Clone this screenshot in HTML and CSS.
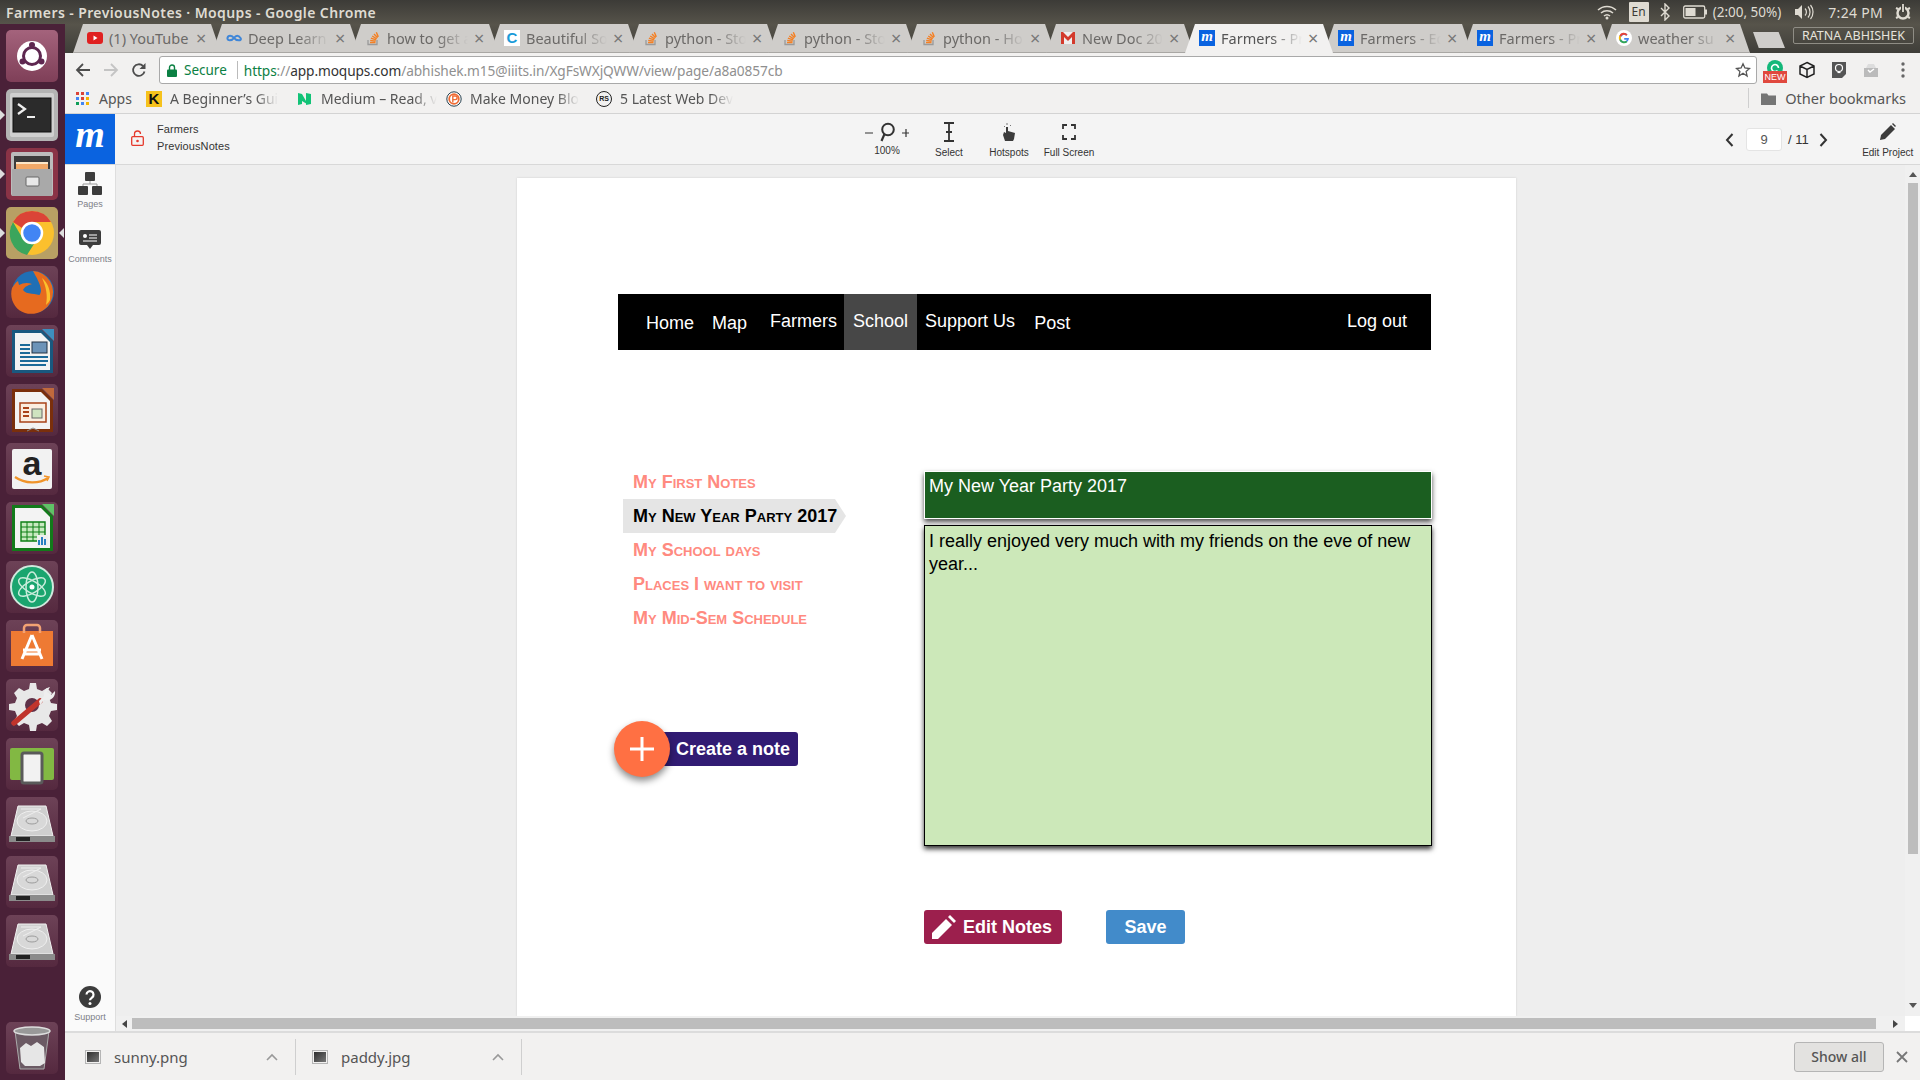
FILE: index.html
```html
<!DOCTYPE html>
<html lang="en">
<head>
    <meta charset="UTF-8">
    <meta name="viewport" content="width=device-width, initial-scale=1.0">
    <title>Farmers - PreviousNotes</title>
    <link rel="stylesheet" href="styles.css">
</head>
<body>
    <svg class="defs" width="0" height="0">
        <defs>
            <linearGradient id="picfill" x1="0" y1="0" x2="1" y2="1"><stop offset="0" stop-color="#2e2e2e"/><stop offset="1" stop-color="#777"/></linearGradient>
        </defs>
        <symbol id="so" viewBox="0 0 16 16">
            <path d="M3 10v4.500h9V10" fill="none" stroke="#9a9a9a" stroke-width="1.300"/>
            <path d="M5 12.500h5.500M5.200 10.400l5.400 .7M5.900 8.200l5.100 1.700M7.200 6l4.500 2.800M9 4l3.600 3.700M11.300 2.300l2 4.600" fill="none" stroke="#f48024" stroke-width="1.400"/>
        </symbol>
        <symbol id="hdd" viewBox="0 0 52 52">
            <path d="M12 9h28l7 30H5z" fill="#cfcfcf" stroke="#f2f2f2"/>
            <ellipse cx="26" cy="24" rx="15" ry="10" fill="#d8d8d8" stroke="#efefef"/>
            <ellipse cx="26" cy="24" rx="6" ry="3" fill="none" stroke="#9c9c9c"/>
            <path d="M15 12l20 0-18 9" fill="none" stroke="#eee"/>
            <path d="M3 39h46v6H3z" fill="#8b8b8b"/>
            <path d="M10 40h14v4H10z" fill="#222"/>
        </symbol>
        <symbol id="pic" viewBox="0 0 16 16">
            <rect x=".5" y="1.500" width="15" height="13" fill="#f2f1f0" stroke="#b5b5b5"/>
            <rect x="2" y="3" width="12" height="10" fill="url(#picfill)"/>
        </symbol>
    </svg>

    <div class="topbar">
        <span class="window-title">Farmers - PreviousNotes · Moqups - Google Chrome</span>
        <div class="indicators">
            <svg class="ind-wifi" width="20" height="16" viewBox="0 0 20 16"><path d="M1 6a13 13 0 0 1 18 0M4 9a9 9 0 0 1 12 0M7 12a4.500 4.500 0 0 1 6 0" fill="none" stroke="#dfdbd2" stroke-width="1.500"/><circle cx="10" cy="14" r="1.500" fill="#dfdbd2"/></svg>
            <span class="ind-lang">En</span>
            <svg class="ind-bt" width="10" height="18" viewBox="0 0 10 18"><path d="M1 5l8 8-4 4V1l4 4-8 8" fill="none" stroke="#dfdbd2" stroke-width="1.400"/></svg>
            <svg class="ind-batt" width="24" height="14" viewBox="0 0 24 14"><rect x=".7" y="1" width="21" height="12" rx="1.500" fill="none" stroke="#dfdbd2" stroke-width="1.300"/><rect x="2.500" y="3" width="10" height="8" fill="#dfdbd2"/><rect x="22" y="4.500" width="2" height="5" fill="#dfdbd2"/></svg>
            <span class="ind-text ind-pct">(2:00, 50%)</span>
            <svg class="ind-vol" width="20" height="16" viewBox="0 0 20 16"><path d="M1 5h3l4-4v14l-4-4H1z" fill="#dfdbd2"/><path d="M11 4.500a5 5 0 0 1 0 7M14 2.500a8.500 8.500 0 0 1 0 11M16.500 1a11 11 0 0 1 0 14" fill="none" stroke="#dfdbd2" stroke-width="1.200"/></svg>
            <span class="ind-text ind-clock">7:24 PM</span>
            <svg class="ind-power" width="18" height="18" viewBox="0 0 18 18"><circle cx="9" cy="10" r="5.500" fill="none" stroke="#dfdbd2" stroke-width="2.500"/><path d="M9 1v8" stroke="#3f3e39" stroke-width="4"/><path d="M9 1v8" stroke="#dfdbd2" stroke-width="1.800"/><path d="M2 5l2 1M16 5l-2 1M2 15l2-1M16 15l-2-1" stroke="#dfdbd2" stroke-width="2"/></svg>
        </div>
    </div>

    <div class="desktop">
        <div class="launcher">
            <div class="tile tile-ubuntu"><svg width="52" height="52" viewBox="0 0 52 52"><circle cx="26" cy="26" r="15" fill="#fff"/><circle cx="26" cy="26" r="8.500" fill="none" stroke="#5e2750" stroke-width="3"/><circle cx="26" cy="15" r="3" fill="#5e2750"/><circle cx="16.500" cy="31.500" r="3" fill="#5e2750"/><circle cx="35.500" cy="31.500" r="3" fill="#5e2750"/></svg></div>
            <div class="tile tile-term marked"><svg width="52" height="52" viewBox="0 0 52 52"><rect x="4" y="4" width="44" height="44" rx="2" fill="#d0d0d0"/><rect x="7" y="9" width="38" height="34" fill="#2b2b2b" stroke="#111"/><path d="M12 15l7 5-7 5" fill="none" stroke="#eee" stroke-width="2.200"/><path d="M21 28h8" stroke="#eee" stroke-width="2"/></svg></div>
            <div class="tile tile-files marked"><svg width="52" height="52" viewBox="0 0 52 52"><rect x="5" y="4" width="42" height="44" rx="2" fill="#bcbcbc"/><rect x="8" y="8" width="36" height="14" fill="#3b3b3b"/><path d="M10 15h32v7H10z" fill="#f0a868"/><path d="M10 15h32" stroke="#fbe6c8" stroke-width="2"/><rect x="6" y="21" width="40" height="27" fill="#a9a9a9"/><rect x="20" y="29" width="13" height="9" rx="1" fill="#e8e8e8" stroke="#666"/></svg></div>
            <div class="tile tile-chrome marked both"><svg width="52" height="52" viewBox="0 0 52 52"><circle cx="26" cy="26" r="22" fill="#fbc02d"/><path d="M26 4a22 22 0 0 1 19 11H26a11 11 0 0 0-10 6L7 15A22 22 0 0 1 26 4z" fill="#db4437"/><path d="M7 15l10 17a11 11 0 0 0 11 5l-7 11A22 22 0 0 1 7 15z" fill="#3ba55c"/><circle cx="26" cy="26" r="10" fill="#4285f4" stroke="#fff" stroke-width="2.500"/></svg></div>
            <div class="tile"><svg width="52" height="52" viewBox="0 0 52 52"><circle cx="27" cy="26" r="21" fill="#1f6fb5"/><path d="M27 5a21 21 0 0 1 18 30c-4 10-16 15-26 12C9 44 3 33 6 22c2-3 3-5 6-7l1 4c4-2 8-3 13-1-3 1-7 2-9 6 3 5 14 3 18 6-3 8-13 8-18 5 9 1 17-3 18-10 0-7-5-14-8-20z" fill="#e66a1f"/><path d="M36 12c6 5 9 13 8 22-1 2-3 4-4 5 2-10 0-18-4-27z" fill="#fbc02d"/></svg></div>
            <div class="tile"><svg width="52" height="52" viewBox="0 0 52 52"><path d="M6 5h30l11 11v32H6z" fill="#19587f"/><path d="M9 8h26l9 9v28H9z" fill="#f3f3f3"/><path d="M36 4l12 0v12z" fill="#3d8fbf"/><path d="M14 20h10M14 24h10M14 28h10M14 32h28M14 36h28M14 40h26" stroke="#1b6a99" stroke-width="1.800"/><rect x="26" y="17" width="15" height="11" fill="#6c93b8" stroke="#234"/></svg></div>
            <div class="tile"><svg width="52" height="52" viewBox="0 0 52 52"><path d="M6 5h30l11 11v32H6z" fill="#7a2f0c"/><path d="M9 8h26l9 9v28H9z" fill="#f3f3f3"/><path d="M36 4l12 0v12z" fill="#c0693c"/><rect x="14" y="19" width="26" height="19" fill="#fbeee0" stroke="#a9431a" stroke-width="1.500"/><path d="M17 24h6M17 28h6M17 32h6" stroke="#a9431a" stroke-width="2"/><rect x="26" y="25" width="10" height="9" fill="#cfe3c0" stroke="#666"/><path d="M27 44l-6 3M27 44l6 3" stroke="#888"/></svg></div>
            <div class="tile"><svg width="52" height="52" viewBox="0 0 52 52"><rect x="6" y="6" width="40" height="40" rx="2" fill="#f2f2f2"/><text class="amz" x="26" y="32" text-anchor="middle">a</text><path d="M9 34c10 7 24 7 33 1" fill="none" stroke="#f0942a" stroke-width="2.200"/><path d="M38 33l5 1-2 4" fill="none" stroke="#f0942a" stroke-width="1.500"/></svg></div>
            <div class="tile"><svg width="52" height="52" viewBox="0 0 52 52"><path d="M6 3h30l11 11v35H6z" fill="#127a1a"/><path d="M9 6h26l9 9v31H9z" fill="#f3f3f3"/><path d="M36 2l12 0v12z" fill="#5fc266"/><path d="M15 20h24v19H15z" fill="#c8eac0" stroke="#0d7f15" stroke-width="1.400"/><path d="M15 25h24M15 30h24M15 35h24M21 20v19M27 20v19M33 20v19" stroke="#0d7f15"/><rect x="31" y="33" width="11" height="11" fill="#eee"/><path d="M33 43v-5M36 43v-8M39 43v-6" stroke="#2a7fc1" stroke-width="2"/></svg></div>
            <div class="tile"><svg width="52" height="52" viewBox="0 0 52 52"><circle cx="26" cy="26" r="21" fill="#1aa56f" stroke="#cfe9dd" stroke-width="2"/><g fill="none" stroke="#c9ecdb" stroke-width="1.500"><ellipse cx="26" cy="26" rx="6" ry="15" transform="rotate(60 26 26)"/><ellipse cx="26" cy="26" rx="6" ry="15" transform="rotate(-60 26 26)"/><ellipse cx="26" cy="26" rx="6" ry="15"/></g><circle cx="26" cy="26" r="2.500" fill="#fff"/></svg></div>
            <div class="tile"><svg width="52" height="52" viewBox="0 0 52 52"><path d="M5 11h42v35H5z" fill="#ee7a33"/><path d="M18 13V8a3 3 0 0 1 3-3h10a3 3 0 0 1 3 3v5" fill="none" stroke="#f3a273" stroke-width="2.500"/><path d="M26 15L16 39M26 15l10 24M17 30h18M17 34h18" stroke="#fff" stroke-width="3" fill="none"/></svg></div>
            <div class="tile"><svg width="52" height="52" viewBox="0 0 52 52"><path d="M24 4h6l1 6 5 2 5-3 5 5-3 5 2 5 6 1v6l-6 1-2 5 3 5-5 5-5-3-5 2-1 6h-6l-1-6-5-2-5 3-5-5 3-5-2-5-6-1v-6l6-1 2-5-3-5 5-5 5 3 5-2z" fill="#e8e8e8"/><circle cx="26" cy="26" r="7" fill="#5e3148"/><path d="M8 44l26-22" stroke="#c0342c" stroke-width="5.500" stroke-linecap="round"/><path d="M33 22l5-5c-1-4 1-8 6-9l-3 5 4 3 4-4c1 6-5 11-11 9l-4 5z" fill="#eee"/></svg></div>
            <div class="tile"><svg width="52" height="52" viewBox="0 0 52 52"><rect x="4" y="10" width="44" height="32" rx="2" fill="#82b843"/><rect x="16" y="15" width="20" height="30" rx="2" fill="#f2f2f2" stroke="#5a5a5a" stroke-width="3"/></svg></div>
            <div class="tile"><svg width="52" height="52"><use href="#hdd"/></svg></div>
            <div class="tile"><svg width="52" height="52"><use href="#hdd"/></svg></div>
            <div class="tile"><svg width="52" height="52"><use href="#hdd"/></svg></div>
            <div class="tile trash"><svg width="52" height="52" viewBox="0 0 52 52"><path d="M9 9l5 38h24l5-38z" fill="#6b5a64" stroke="#aaa"/><ellipse cx="26" cy="9" rx="18" ry="4" fill="#999" stroke="#ddd" stroke-width="1.500"/><path d="M14 26l6-5 5 3 6-4 7 5 1 16-5 3H19l-4-4z" fill="#e6e6e6"/></svg></div>
        </div>

        <div class="browser">
            <div class="tabstrip">
                <div class="tab"><svg class="fav" width="16" height="16" viewBox="0 0 16 16"><rect y="2" width="16" height="12" rx="3" fill="#e02020"/><path d="M6.500 5.500l4 2.500-4 2.500z" fill="#fff"/></svg><span class="tab-title whole">(1) YouTube</span><span class="tab-x">×</span></div>
                <div class="tab"><svg class="fav" width="16" height="16" viewBox="0 0 16 16"><path d="M8 8c-2-3-6-3-6.500 0S6 11 8 8s4.500-3 6.500 0-4.500 3-6.500 0z" fill="none" stroke="#3f86d8" stroke-width="2"/></svg><span class="tab-title">Deep Learn</span><span class="tab-x">×</span></div>
                <div class="tab"><svg class="fav" width="16" height="16"><use href="#so"/></svg><span class="tab-title">how to get a</span><span class="tab-x">×</span></div>
                <div class="tab"><span class="fav fav-c">C</span><span class="tab-title">Beautiful So</span><span class="tab-x">×</span></div>
                <div class="tab"><svg class="fav" width="16" height="16"><use href="#so"/></svg><span class="tab-title">python - Sto</span><span class="tab-x">×</span></div>
                <div class="tab"><svg class="fav" width="16" height="16"><use href="#so"/></svg><span class="tab-title">python - Sto</span><span class="tab-x">×</span></div>
                <div class="tab"><svg class="fav" width="16" height="16"><use href="#so"/></svg><span class="tab-title">python - Ho</span><span class="tab-x">×</span></div>
                <div class="tab"><svg class="fav" width="16" height="16" viewBox="0 0 16 16"><path d="M1 2h14v12H1z" fill="#eee"/><path d="M1 14V2h2l5 5 5-5h2v12h-3V7L8 11 4 7v7z" fill="#d33a2c"/></svg><span class="tab-title">New Doc 20</span><span class="tab-x">×</span></div>
                <div class="tab active"><span class="fav fav-m">m</span><span class="tab-title">Farmers - Pr</span><span class="tab-x">×</span></div>
                <div class="tab"><span class="fav fav-m">m</span><span class="tab-title">Farmers - Ed</span><span class="tab-x">×</span></div>
                <div class="tab"><span class="fav fav-m">m</span><span class="tab-title">Farmers - Pr</span><span class="tab-x">×</span></div>
                <div class="tab"><svg class="fav" width="16" height="16" viewBox="0 0 16 16"><circle cx="8" cy="8" r="8" fill="#fff"/><path d="M13 8H8.200v1.800h2.800A3.200 3.200 0 1 1 10.200 5.700l1.300-1.300A5 5 0 1 0 13 8z" fill="#4285f4"/><path d="M3.400 5.500A5 5 0 0 1 11.500 4.400l-1.300 1.300A3.200 3.200 0 0 0 5 6.800z" fill="#ea4335"/><path d="M3.400 5.500L5 6.800a3.200 3.200 0 0 0 0 2.400l-1.500 1.200a5 5 0 0 1-.1-4.900z" fill="#fbbc05"/><path d="M3.500 10.400L5 9.200a3.200 3.200 0 0 0 5 1.500l1.500 1.200a5 5 0 0 1-8-1.500z" fill="#34a853"/></svg><span class="tab-title">weather su</span><span class="tab-x">×</span></div>
                <div class="newtab"></div>
                <span class="profile">RATNA ABHISHEK</span>
            </div>

            <div class="toolbar">
                <svg class="nav-ic ic-back" width="16" height="16" viewBox="0 0 16 16"><path d="M15 8H2M8 2L2 8l6 6" fill="none" stroke="#4d4d4d" stroke-width="1.800"/></svg>
                <svg class="nav-ic ic-fwd" width="16" height="16" viewBox="0 0 16 16"><path d="M1 8h13M8 2l6 6-6 6" fill="none" stroke="#c4c4c4" stroke-width="1.800"/></svg>
                <svg class="nav-ic ic-reload" width="16" height="16" viewBox="0 0 16 16"><path d="M13.500 9.500A5.800 5.800 0 1 1 12 4" fill="none" stroke="#4d4d4d" stroke-width="1.800"/><path d="M14.500 1v6h-6z" fill="#4d4d4d"/></svg>
                <div class="omnibox">
                    <svg class="lock" width="10" height="13" viewBox="0 0 10 13"><path d="M2.500 6V3.500a2.500 2.500 0 0 1 5 0V6" fill="none" stroke="#0b8043" stroke-width="1.400"/><rect y="5.500" width="10" height="7.500" rx="1" fill="#0b8043"/></svg>
                    <span class="secure">Secure</span>
                    <span class="omni-sep"></span>
                    <span class="url"><span class="scheme">https</span>://<span class="host">app.moqups.com</span>/abhishek.m15@iiits.in/XgFsWXjQWW/view/page/a8a0857cb</span>
                    <svg class="star" width="16" height="16" viewBox="0 0 16 16"><path d="M8 1.800l1.900 4.200 4.600.5-3.400 3.100 1 4.500L8 11.300l-4.100 2.800 1-4.500L1.500 6.500 6.100 6z" fill="none" stroke="#555" stroke-width="1.300"/></svg>
                </div>
                <div class="exts">
                    <div class="ext-gram"><svg width="18" height="16" viewBox="0 0 18 16"><circle cx="9" cy="9" r="8" fill="#14b87a"/><path d="M12.500 9a3.500 3.500 0 1 0-1 2.500" fill="none" stroke="#fff" stroke-width="1.600"/></svg><span class="new-badge">NEW</span></div>
                    <svg class="ext-cube" width="18" height="18" viewBox="0 0 18 18"><path d="M9 1.500l7 3.500v8l-7 3.500L2 13V5zM2 5l7 3.500L16 5M9 8.500v8" fill="none" stroke="#222" stroke-width="1.500"/></svg>
                    <svg class="ext-bulb" width="16" height="18" viewBox="0 0 16 18"><path d="M1 1h14v12l-4 4H1z" fill="#555"/><circle cx="8" cy="7" r="3.500" fill="none" stroke="#fff" stroke-width="1.200"/><path d="M6.500 11.500h3" stroke="#fff" stroke-width="1.200"/></svg>
                    <svg class="ext-inbox" width="18" height="16" viewBox="0 0 18 16"><path d="M2 6h14v9H2z" fill="#bbb"/><path d="M4 6l2-4h6l2 4" fill="#ddd"/><path d="M6 8l2 2 4-3" fill="none" stroke="#fff" stroke-width="1.400"/></svg>
                    <svg class="ext-menu" width="6" height="18" viewBox="0 0 6 18"><circle cx="3" cy="3" r="1.700" fill="#666"/><circle cx="3" cy="9" r="1.700" fill="#666"/><circle cx="3" cy="15" r="1.700" fill="#666"/></svg>
                </div>
            </div>

            <div class="bookmarks">
                <div class="bm bm-apps"><svg width="13" height="13" viewBox="0 0 13 13"><g fill="#db4437"><rect width="3" height="3"/><rect x="5" width="3" height="3"/><rect x="10" width="3" height="3" fill="#4285f4"/></g><g fill="#f4b400"><rect y="5" width="3" height="3" fill="#4285f4"/><rect x="5" y="5" width="3" height="3" fill="#db4437"/><rect x="10" y="5" width="3" height="3"/></g><g fill="#0f9d58"><rect y="10" width="3" height="3"/><rect x="5" y="10" width="3" height="3" fill="#4285f4"/><rect x="10" y="10" width="3" height="3" fill="#f4b400"/></g></svg><span class="bm-text">Apps</span></div>
                <div class="bm bm-k"><span class="bm-ic ic-k">K</span><span class="bm-text fade">A Beginner’s Gui</span></div>
                <div class="bm bm-med"><svg class="bm-ic" width="15" height="15" viewBox="0 0 15 15"><path d="M1 2l4 1v10l-4 1zM5 3l4 7 1-6v9l-5-3zM9 2l5 1v10l-5 1z" fill="#12c377"/></svg><span class="bm-text fade">Medium – Read, v</span></div>
                <div class="bm bm-money"><svg class="bm-ic" width="16" height="16" viewBox="0 0 16 16"><circle cx="8" cy="8" r="7.200" fill="#fff" stroke="#26404f"/><circle cx="8" cy="8" r="4.800" fill="none" stroke="#ef6c35" stroke-width="1.800"/><path d="M6.800 11.500V5h2.500a1.800 1.800 0 0 1 0 3.600H6.800" fill="none" stroke="#ef6c35" stroke-width="1.400"/></svg><span class="bm-text fade">Make Money Blo</span></div>
                <div class="bm bm-rs"><span class="bm-ic ic-rs">RS</span><span class="bm-text fade">5 Latest Web Dev</span></div>
                <div class="bm-other">
                    <svg width="15" height="13" viewBox="0 0 15 13"><path d="M0 1.500h6l1.500 2H15V13H0z" fill="#757575"/></svg>
                    <span class="bm-text">Other bookmarks</span>
                </div>
            </div>

            <div class="app-head">
                <div class="logo">m</div>
                <svg class="open-lock" width="13" height="16" viewBox="0 0 13 16"><path d="M3.500 7V4a3 3 0 0 1 6 0" fill="none" stroke="#e5392c" stroke-width="1.300"/><rect x=".7" y="6.700" width="11.600" height="8.600" rx="1" fill="none" stroke="#e5392c" stroke-width="1.300"/><circle cx="6.500" cy="11" r="1.300" fill="#e5392c"/></svg>
                <div class="crumbs"><span>Farmers</span><span>PreviousNotes</span></div>
                <div class="tools">
                    <div class="tool tool-zoom">
                        <svg width="44" height="20" viewBox="0 0 44 20"><path d="M0 11h8M37 11h8M41 7v8" stroke="#333" stroke-width="1.200"/><circle cx="23" cy="7.500" r="5.800" fill="none" stroke="#333" stroke-width="2"/><path d="M19.500 12l-3 7" stroke="#333" stroke-width="2.200"/></svg>
                        <span>100%</span>
                    </div>
                    <div class="tool tool-select">
                        <svg width="12" height="20" viewBox="0 0 12 20"><path d="M1 1h10M1 19h10M6 1v18M3 10h6" stroke="#333" stroke-width="1.800"/></svg>
                        <span>Select</span>
                    </div>
                    <div class="tool tool-hot">
                        <svg width="14" height="20" viewBox="0 0 14 20"><path d="M3 19l-2-6 1-3 2 1V5h2v4l7 2-1 6-1 2z" fill="#3c3c3c"/><path d="M2 4l1 1M5 1v2M9 3L8 4" stroke="#777"/></svg>
                        <span>Hotspots</span>
                    </div>
                    <div class="tool tool-full">
                        <svg width="14" height="20" viewBox="0 0 14 20"><path d="M1 7V3h4M9 3h4v4M13 13v4H9M5 17H1v-4" fill="none" stroke="#333" stroke-width="1.800"/></svg>
                        <span>Full Screen</span>
                    </div>
                </div>
                <div class="pager">
                    <svg width="9" height="14" viewBox="0 0 9 14"><path d="M7.500 1L2 7l5.500 6" fill="none" stroke="#333" stroke-width="2"/></svg>
                    <span class="page-num">9</span>
                    <span class="page-total">/ 11</span>
                    <svg width="9" height="14" viewBox="0 0 9 14"><path d="M1.500 1L7 7l-5.500 6" fill="none" stroke="#333" stroke-width="2"/></svg>
                </div>
                <div class="tool tool-edit">
                    <svg width="18" height="20" viewBox="0 0 18 20"><path d="M1 18l1-5L12 3l4 4L6 17z" fill="#3c3c3c"/><path d="M13 2l1-1 3 3-1 1z" fill="#3c3c3c"/></svg>
                    <span>Edit Project</span>
                </div>
            </div>

            <div class="app-body">
                <div class="rail">
                    <div class="rail-item rail-pages">
                        <svg width="24" height="24" viewBox="0 0 24 24"><rect x="7" y="0" width="10" height="9" rx="1" fill="#3c3c3c"/><rect x="0" y="14" width="10" height="9" rx="1" fill="#3c3c3c"/><rect x="14" y="14" width="10" height="9" rx="1" fill="#3c3c3c"/><path d="M12 9v3M5 14v-2h14v2" fill="none" stroke="#999"/></svg>
                        <span>Pages</span>
                    </div>
                    <div class="rail-item rail-comments">
                        <svg width="22" height="19" viewBox="0 0 22 19"><path d="M2 0h18a2 2 0 0 1 2 2v11a2 2 0 0 1-2 2h-6l-3 4-3-4H2a2 2 0 0 1-2-2V2a2 2 0 0 1 2-2z" fill="#3c3c3c"/><circle cx="6" cy="6" r="2" fill="#fff"/><path d="M10 5h8M10 8h8M4 11h14" stroke="#fff"/></svg>
                        <span>Comments</span>
                    </div>
                    <div class="rail-item rail-support">
                        <svg width="22" height="22" viewBox="0 0 22 22"><circle cx="11" cy="11" r="11" fill="#3c3c3c"/><path d="M7.500 8.500a3.500 3.500 0 1 1 5.500 3c-1.200.8-2 1.300-2 2.700" fill="none" stroke="#fff" stroke-width="2.200"/><circle cx="11" cy="17.500" r="1.500" fill="#fff"/></svg>
                        <span>Support</span>
                    </div>
                </div>
                <div class="stage">
                    <div class="viewport">
                        <div class="canvas">
                            <div class="site-nav">
                                <a class="nav-home">Home</a>
                                <a class="nav-map">Map</a>
                                <a class="nav-farmers raised">Farmers</a>
                                <a class="nav-school raised">School</a>
                                <a class="nav-support raised">Support Us</a>
                                <a class="nav-post">Post</a>
                                <a class="nav-logout raised">Log out</a>
                            </div>
                            <div class="notes">
                                <div class="notes-side">
                                    <ul class="note-list">
                                        <li>My First Notes</li>
                                        <li class="current">My New Year Party 2017</li>
                                        <li>My School days</li>
                                        <li>Places I want to visit</li>
                                        <li>My Mid-Sem Schedule</li>
                                    </ul>
                                    <div class="create">
                                        <span class="create-plus"><svg width="24" height="24" viewBox="0 0 24 24"><path d="M12 0v24M0 12h24" stroke="#fff" stroke-width="3"/></svg></span>
                                        <span class="create-label">Create a note</span>
                                    </div>
                                </div>
                                <div class="notes-main">
                                    <div class="note-title">My New Year Party 2017</div>
                                    <div class="note-body">I really enjoyed very much with my friends on the eve of new year...</div>
                                    <div class="note-actions">
                                        <button class="btn btn-edit"><svg width="24" height="24" viewBox="0 0 24 24"><path d="M0 24v-6L14 4l6 6L6 24z" fill="#fff"/><path d="M16 2l2-2 6 6-2 2z" fill="#fff"/></svg>Edit Notes</button>
                                        <button class="btn btn-save">Save</button>
                                    </div>
                                </div>
                            </div>
                        </div>
                    </div>
                    <div class="vbar">
                        <span class="arrow-up"></span>
                        <span class="vthumb"></span>
                        <span class="arrow-down"></span>
                    </div>
                    <div class="hbar">
                        <span class="arrow-left"></span>
                        <span class="hthumb"></span>
                        <span class="arrow-right"></span>
                    </div>
                    <div class="corner"></div>
                </div>
            </div>

            <div class="downloads">
                <div class="dl dl-first">
                    <svg width="16" height="16"><use href="#pic"/></svg>
                    <span class="dl-name">sunny.png</span>
                    <svg class="chev" width="12" height="8" viewBox="0 0 12 8"><path d="M1 7l5-5 5 5" fill="none" stroke="#999" stroke-width="1.600"/></svg>
                </div>
                <div class="dl">
                    <svg width="16" height="16"><use href="#pic"/></svg>
                    <span class="dl-name">paddy.jpg</span>
                    <svg class="chev" width="12" height="8" viewBox="0 0 12 8"><path d="M1 7l5-5 5 5" fill="none" stroke="#999" stroke-width="1.600"/></svg>
                </div>
                <button class="show-all">Show all</button>
                <svg class="dl-close" width="12" height="12" viewBox="0 0 12 12"><path d="M1 1l10 10M11 1L1 11" stroke="#777" stroke-width="1.800"/></svg>
            </div>
        </div>
    </div>
</body>
</html>
```

FILE: styles.css
```css
* {
    box-sizing: border-box;
}
body {
    margin: 0;
    width: 1920px;
    height: 1080px;
    overflow: hidden;
    font-family: "Noto Sans", sans-serif;
    background: #f2f1f0;
}
.defs {
    position: absolute;
}

/* ubuntu top panel */
.topbar {
    height: 24px;
    display: flex;
    align-items: center;
    padding-left: 6px;
    background: linear-gradient(#3c3b37, #56534a);
    color: #dfdbd2;
}
.window-title {
    font-size: 14px;
    font-weight: 600;
    letter-spacing: .4px;
}
.indicators {
    margin-left: auto;
    display: flex;
    align-items: center;
    height: 24px;
}
.ind-wifi {
    margin-right: 12px;
}
.ind-lang {
    width: 20px;
    height: 20px;
    margin-right: 11px;
    background: #dfdbd2;
    color: #3c3b37;
    font-size: 12px;
    text-align: center;
    line-height: 20px;
    border-radius: 1px;
}
.ind-bt {
    margin-right: 13px;
}
.ind-text {
    font-size: 14px;
}
.ind-pct {
    margin-left: 6px;
    margin-right: 13px;
    font-size: 13.500px;
}
.ind-vol {
    margin-right: 14px;
}
.ind-clock {
    margin-right: 11px;
    letter-spacing: .3px;
}
.ind-power {
    margin-right: 8px;
}

.desktop {
    display: flex;
    height: 1056px;
}

/* launcher */
.launcher {
    width: 65px;
    flex-shrink: 0;
    display: flex;
    flex-direction: column;
    gap: 7px;
    padding: 6px 0;
    background: #4a2138;
}
.tile {
    position: relative;
    width: 52px;
    height: 52px;
    margin-left: 6px;
    border-radius: 5px;
    background: linear-gradient(#6d4257, #55293f);
}
.tile svg {
    display: block;
}
.tile-ubuntu {
    background: linear-gradient(#a4637c, #7f3f58);
}
.tile-term {
    background: #b4b4b4;
}
.tile-files {
    background: #8a3346;
}
.tile-chrome {
    background: #b8a064;
}
.trash {
    margin-top: auto;
}
.marked::before, .both::after {
    content: "";
    position: absolute;
    top: 21px;
    border: 5px solid transparent;
}
.marked::before {
    left: -6px;
    border-left-color: #ddd;
}
.both::after {
    right: -6px;
    border-right-color: #ddd;
}
.amz {
    font-family: "Liberation Sans", sans-serif;
    font-size: 34px;
    font-weight: bold;
    fill: #222;
}

.browser {
    flex: 1;
    min-width: 0;
    display: flex;
    flex-direction: column;
}

/* tabs */
.tabstrip {
    height: 29px;
    display: flex;
    padding-left: 8px;
    background: linear-gradient(#57544b, #3f3e39);
}
.tab {
    width: 148px;
    height: 29px;
    margin-right: -9px;
    padding: 0 0 1px 14px;
    display: flex;
    align-items: center;
    flex-shrink: 0;
    background: #cfcdca;
    border-bottom: 1px solid #a9a7a4;
    color: #6b6967;
    clip-path: polygon(10px 0, 138px 0, 148px 100%, 0 100%);
}
.tab.active {
    position: relative;
    z-index: 1;
    background: #f2f1f0;
    border-bottom: none;
    color: #555;
}
.fav {
    flex-shrink: 0;
    margin-right: 6px;
}
.fav-c {
    width: 16px;
    height: 16px;
    background: #fff;
    color: #1a9bd8;
    font: bold 15px/16px "Liberation Sans", sans-serif;
    text-align: center;
}
.fav-m {
    width: 16px;
    height: 16px;
    background: #0a63e0;
    color: #fff;
    font: italic bold 15px/13px "Liberation Serif", serif;
    text-align: center;
}
.tab-title {
    width: 81px;
    font-size: 14.500px;
    white-space: nowrap;
    overflow: hidden;
    -webkit-mask-image: linear-gradient(to right, #000 62%, transparent);
    mask-image: linear-gradient(to right, #000 62%, transparent);
}
.tab-title.whole {
    -webkit-mask-image: none;
    mask-image: none;
}
.tab-x {
    margin-left: 6px;
    font-size: 18px;
    line-height: 18px;
    color: #777;
}
.newtab {
    width: 32px;
    height: 16px;
    margin: 8px 0 0 12px;
    flex-shrink: 0;
    background: #cfcdca;
    clip-path: polygon(0 0, 80% 0, 100% 100%, 18% 100%);
}
.profile {
    width: 121px;
    height: 17px;
    margin: 3px 0 0 8px;
    flex-shrink: 0;
    border: 1px solid #8f8d85;
    border-radius: 2px;
    color: #e6e3dc;
    font-size: 12.500px;
    line-height: 15px;
    text-align: center;
    white-space: nowrap;
}

/* browser toolbar */
.toolbar {
    height: 34px;
    display: flex;
    align-items: center;
    background: #f2f1f0;
    padding-left: 10px;
}
.nav-ic {
    margin-right: 12px;
}
.omnibox {
    width: 1598px;
    height: 28px;
    flex-shrink: 0;
    display: flex;
    align-items: center;
    padding: 0 5px 0 7px;
    background: #fff;
    border: 1px solid #a9a9a9;
    border-radius: 3px;
    font-size: 13.500px;
}
.lock {
    margin-right: 7px;
}
.secure {
    color: #0b8043;
}
.omni-sep {
    width: 1px;
    height: 18px;
    margin: 0 6px 0 10px;
    background: #bbb;
}
.url {
    color: #8f8f8f;
    font-size: 13.700px;
    letter-spacing: -.1px;
    white-space: nowrap;
}
.scheme {
    color: #0b8043;
}
.host {
    color: #333;
}
.star {
    margin-left: auto;
}
.exts {
    flex: 1;
    display: flex;
    align-items: center;
    padding-left: 6px;
}
.ext-gram {
    position: relative;
    width: 24px;
    height: 24px;
    flex-shrink: 0;
    text-align: center;
}
.ext-cube {
    margin-left: 11px;
}
.ext-bulb, .ext-inbox {
    margin-left: 15px;
}
.ext-menu {
    margin-left: 20px;
}
.new-badge {
    position: absolute;
    left: 0;
    top: 13px;
    width: 24px;
    height: 12px;
    background: #e0483e;
    color: #fff;
    font: 9px/12px "Liberation Sans", sans-serif;
}

/* bookmarks */
.bookmarks {
    height: 27px;
    display: flex;
    align-items: center;
    padding-bottom: 3px;
    background: #f2f1f0;
    border-bottom: 1px solid #d3d3d3;
    font-size: 14px;
    color: #555;
}
.bm {
    display: flex;
    align-items: center;
    flex-shrink: 0;
    white-space: nowrap;
    overflow: hidden;
}
.bm-apps {
    width: 81px;
    padding-left: 11px;
    gap: 10px;
}
.bm-k {
    width: 151px;
    gap: 8px;
}
.bm-med {
    width: 149px;
    gap: 9px;
}
.bm-money {
    width: 150px;
    gap: 8px;
}
.bm-rs {
    width: 140px;
    gap: 8px;
}
.bm-ic {
    flex-shrink: 0;
}
.ic-k {
    width: 16px;
    height: 16px;
    background: #f6c21c;
    color: #111;
    font: bold 15px/16px "Liberation Sans", sans-serif;
    text-align: center;
}
.ic-rs {
    width: 16px;
    height: 16px;
    border: 1.500px solid #222;
    border-radius: 50%;
    color: #222;
    font: bold 7px/13px "Liberation Sans", sans-serif;
    text-align: center;
}
.fade {
    overflow: hidden;
    -webkit-mask-image: linear-gradient(to right, #000 80%, transparent);
    mask-image: linear-gradient(to right, #000 80%, transparent);
}
.bm-other {
    margin-left: auto;
    margin-bottom: 1px;
    display: flex;
    align-items: center;
    gap: 9px;
    height: 20px;
    padding: 0 14px 0 12px;
    border-left: 1px solid #cfcfcf;
    font-size: 14.600px;
}

/* moqups header */
.app-head {
    height: 51px;
    flex-shrink: 0;
    display: flex;
    align-items: center;
    background: #f4f4f4;
    border-bottom: 1px solid #d8d8d8;
    font-family: "Liberation Sans", sans-serif;
    color: #333;
}
.logo {
    width: 50px;
    height: 50px;
    flex-shrink: 0;
    background: #0a63e0;
    color: #fff;
    font: italic bold 38px/40px "Liberation Serif", serif;
    text-align: center;
}
.open-lock {
    margin: 0 0 2px 16px;
}
.crumbs {
    margin-left: 13px;
    width: 170px;
    padding-bottom: 2px;
    display: flex;
    flex-direction: column;
    gap: 6px;
    font-size: 11px;
    line-height: 11px;
    letter-spacing: .1px;
}
.tools {
    margin-left: 538px;
    display: flex;
}
.tool {
    display: flex;
    flex-direction: column;
    align-items: center;
    padding-top: 2px;
    font-size: 10px;
    line-height: 12px;
    white-space: nowrap;
}
.tool svg {
    margin-bottom: 5px;
}
.tool-zoom {
    width: 44px;
}
.tool-zoom svg {
    margin-bottom: 3px;
}
.tool-select {
    width: 50px;
    margin-left: 15px;
}
.tool-hot {
    width: 50px;
    margin-left: 10px;
}
.tool-full {
    width: 50px;
    margin-left: 10px;
}
.pager {
    margin-left: 631px;
    padding-top: 1px;
    display: flex;
    align-items: center;
    font-size: 13px;
}
.page-num {
    width: 36px;
    height: 23px;
    margin-left: 12px;
    background: #fff;
    border: 1px solid #e4e4e4;
    border-radius: 3px;
    text-align: center;
    line-height: 21px;
    color: #555;
}
.page-total {
    margin: 0 10px 0 6px;
}
.tool-edit {
    width: 60px;
    margin-left: 30px;
}

/* moqups body */
.app-body {
    flex: 1;
    min-height: 0;
    display: flex;
    font-family: "Liberation Sans", sans-serif;
}
.rail {
    width: 51px;
    flex-shrink: 0;
    display: flex;
    flex-direction: column;
    align-items: center;
    background: #fafafa;
    border-right: 1px solid #dedede;
    padding-top: 7px;
    font-size: 9px;
    color: #7d8088;
}
.rail-item {
    display: flex;
    flex-direction: column;
    align-items: center;
    gap: 3px;
}
.rail-comments {
    margin-top: 21px;
    gap: 5px;
}
.rail-support {
    margin-top: auto;
    margin-bottom: 9px;
    gap: 4px;
}
.stage {
    flex: 1;
    min-width: 0;
    display: grid;
    grid-template-columns: 1fr 15px;
    grid-template-rows: 1fr 15px;
    background: #eee;
}
.viewport {
    overflow: hidden;
    padding: 13px 0 0 401px;
}
.canvas {
    width: 999px;
    height: 838px;
    padding: 116px 0 0 101px;
    background: #fff;
    box-shadow: 0 0 2px #ccc;
}

/* the mocked site */
.site-nav {
    width: 813px;
    height: 56px;
    display: flex;
    background: #000;
    color: #fff;
    font-size: 18px;
    line-height: 56px;
}
.site-nav a {
    display: block;
    padding-top: 1px;
}
.site-nav a.raised {
    padding-top: 0;
    line-height: 54px;
}
.nav-home {
    margin-left: 28px;
}
.nav-map {
    margin-left: 18px;
}
.nav-farmers {
    margin-left: 23px;
}
.nav-school {
    margin-left: 7px;
    padding: 0 9px;
    background: #474747;
}
.nav-support {
    margin-left: 8px;
}
.nav-post {
    margin-left: 19px;
}
.nav-logout {
    margin-left: auto;
    margin-right: 24px;
}
.notes {
    display: flex;
    margin-top: 115px;
}
.notes-side {
    width: 301px;
    margin-left: 5px;
    flex-shrink: 0;
}
.note-list {
    list-style: none;
    margin: 0;
    padding: 0;
    font-size: 18px;
    font-variant: small-caps;
    font-weight: bold;
    color: #ff8a80;
}
.note-list li {
    width: 223px;
    height: 34px;
    padding-left: 10px;
    line-height: 34px;
    white-space: nowrap;
}
.note-list .current {
    background: #e5e5e5;
    color: #000;
    clip-path: polygon(0 0, 212px 0, 100% 50%, 212px 100%, 0 100%);
}
.create {
    display: flex;
    align-items: center;
    margin: 86px 0 0 -9px;
    color: #fff;
    font-size: 18px;
    font-weight: bold;
}
.create-plus {
    position: relative;
    z-index: 1;
    width: 56px;
    height: 56px;
    display: flex;
    align-items: center;
    justify-content: center;
    flex-shrink: 0;
    border-radius: 50%;
    background: #ff7043;
    box-shadow: 0 4px 7px rgba(0, 0, 0, .45);
}
.create-label {
    height: 34px;
    margin-left: -10px;
    padding-left: 16px;
    width: 138px;
    background: #311b73;
    border-radius: 3px;
    line-height: 34px;
    white-space: nowrap;
}
.notes-main {
    width: 508px;
    flex-shrink: 0;
    padding-top: 6px;
}
.note-title {
    height: 48px;
    padding: 3px 4px;
    background: #1b5e20;
    border: 1px solid #fff;
    box-shadow: 0 3px 5px rgba(0, 0, 0, .7);
    color: #fff;
    font-size: 18px;
    line-height: 22px;
}
.note-body {
    height: 321px;
    margin-top: 6px;
    padding: 4px;
    background: #cce8b9;
    border: 1px solid #000;
    box-shadow: 0 3px 5px rgba(0, 0, 0, .8);
    color: #000;
    font-size: 18px;
    line-height: 23px;
}
.note-actions {
    display: flex;
    margin-top: 64px;
}
.btn {
    height: 34px;
    padding: 0;
    border: none;
    border-radius: 3px;
    color: #fff;
    font-family: "Liberation Sans", sans-serif;
    font-size: 18px;
    font-weight: bold;
}
.btn-edit {
    width: 138px;
    display: flex;
    align-items: center;
    gap: 7px;
    padding-left: 8px;
    background: #9c1f4d;
}
.btn-save {
    width: 79px;
    margin-left: 44px;
    background: #428bca;
}

/* scrollbars */
.vbar {
    grid-column: 2;
    grid-row: 1;
    display: flex;
    flex-direction: column;
    align-items: center;
    background: #f0f0f0;
}
.vthumb {
    width: 10px;
    height: 671px;
    margin-top: 6px;
    background: #bdbdbd;
}
.arrow-up, .arrow-down, .arrow-left, .arrow-right {
    width: 0;
    height: 0;
    border: 4px solid transparent;
}
.arrow-up {
    margin-top: 3px;
    border-bottom: 5px solid #555;
}
.arrow-down {
    margin-top: auto;
    margin-bottom: 4px;
    border-top: 5px solid #555;
}
.hbar {
    grid-column: 1;
    grid-row: 2;
    display: flex;
    align-items: center;
    padding-left: 6px;
    background: #f0f0f0;
}
.hthumb {
    width: 1744px;
    height: 11px;
    margin-left: 5px;
    background: #bdbdbd;
}
.arrow-left {
    border-right: 5px solid #444;
    border-left: 0;
}
.arrow-right {
    margin-left: 17px;
    border-left: 5px solid #444;
    border-right: 0;
}
.corner {
    grid-column: 2;
    grid-row: 2;
    background: #fff;
}

/* download shelf */
.downloads {
    height: 49px;
    flex-shrink: 0;
    display: flex;
    align-items: center;
    padding-left: 20px;
    background: #f2f1f0;
    border-top: 2px solid #dcdcdc;
    font-size: 15px;
    color: #555;
}
.dl {
    width: 226px;
    height: 36px;
    display: flex;
    align-items: center;
    flex-shrink: 0;
    padding-left: 16px;
    border-right: 1px solid #cfcfcf;
}
.dl-first {
    width: 211px;
    padding-left: 0;
}
.dl-name {
    margin-left: 13px;
}
.chev {
    margin-left: auto;
    margin-right: 17px;
}
.show-all {
    width: 90px;
    height: 30px;
    margin-left: auto;
    padding: 0;
    background: #e3e2e0;
    border: 1px solid #b5b5b5;
    border-radius: 3px;
    color: #555;
    font: 500 14px "Noto Sans", sans-serif;
}
.dl-close {
    margin: 0 12px;
}
```
